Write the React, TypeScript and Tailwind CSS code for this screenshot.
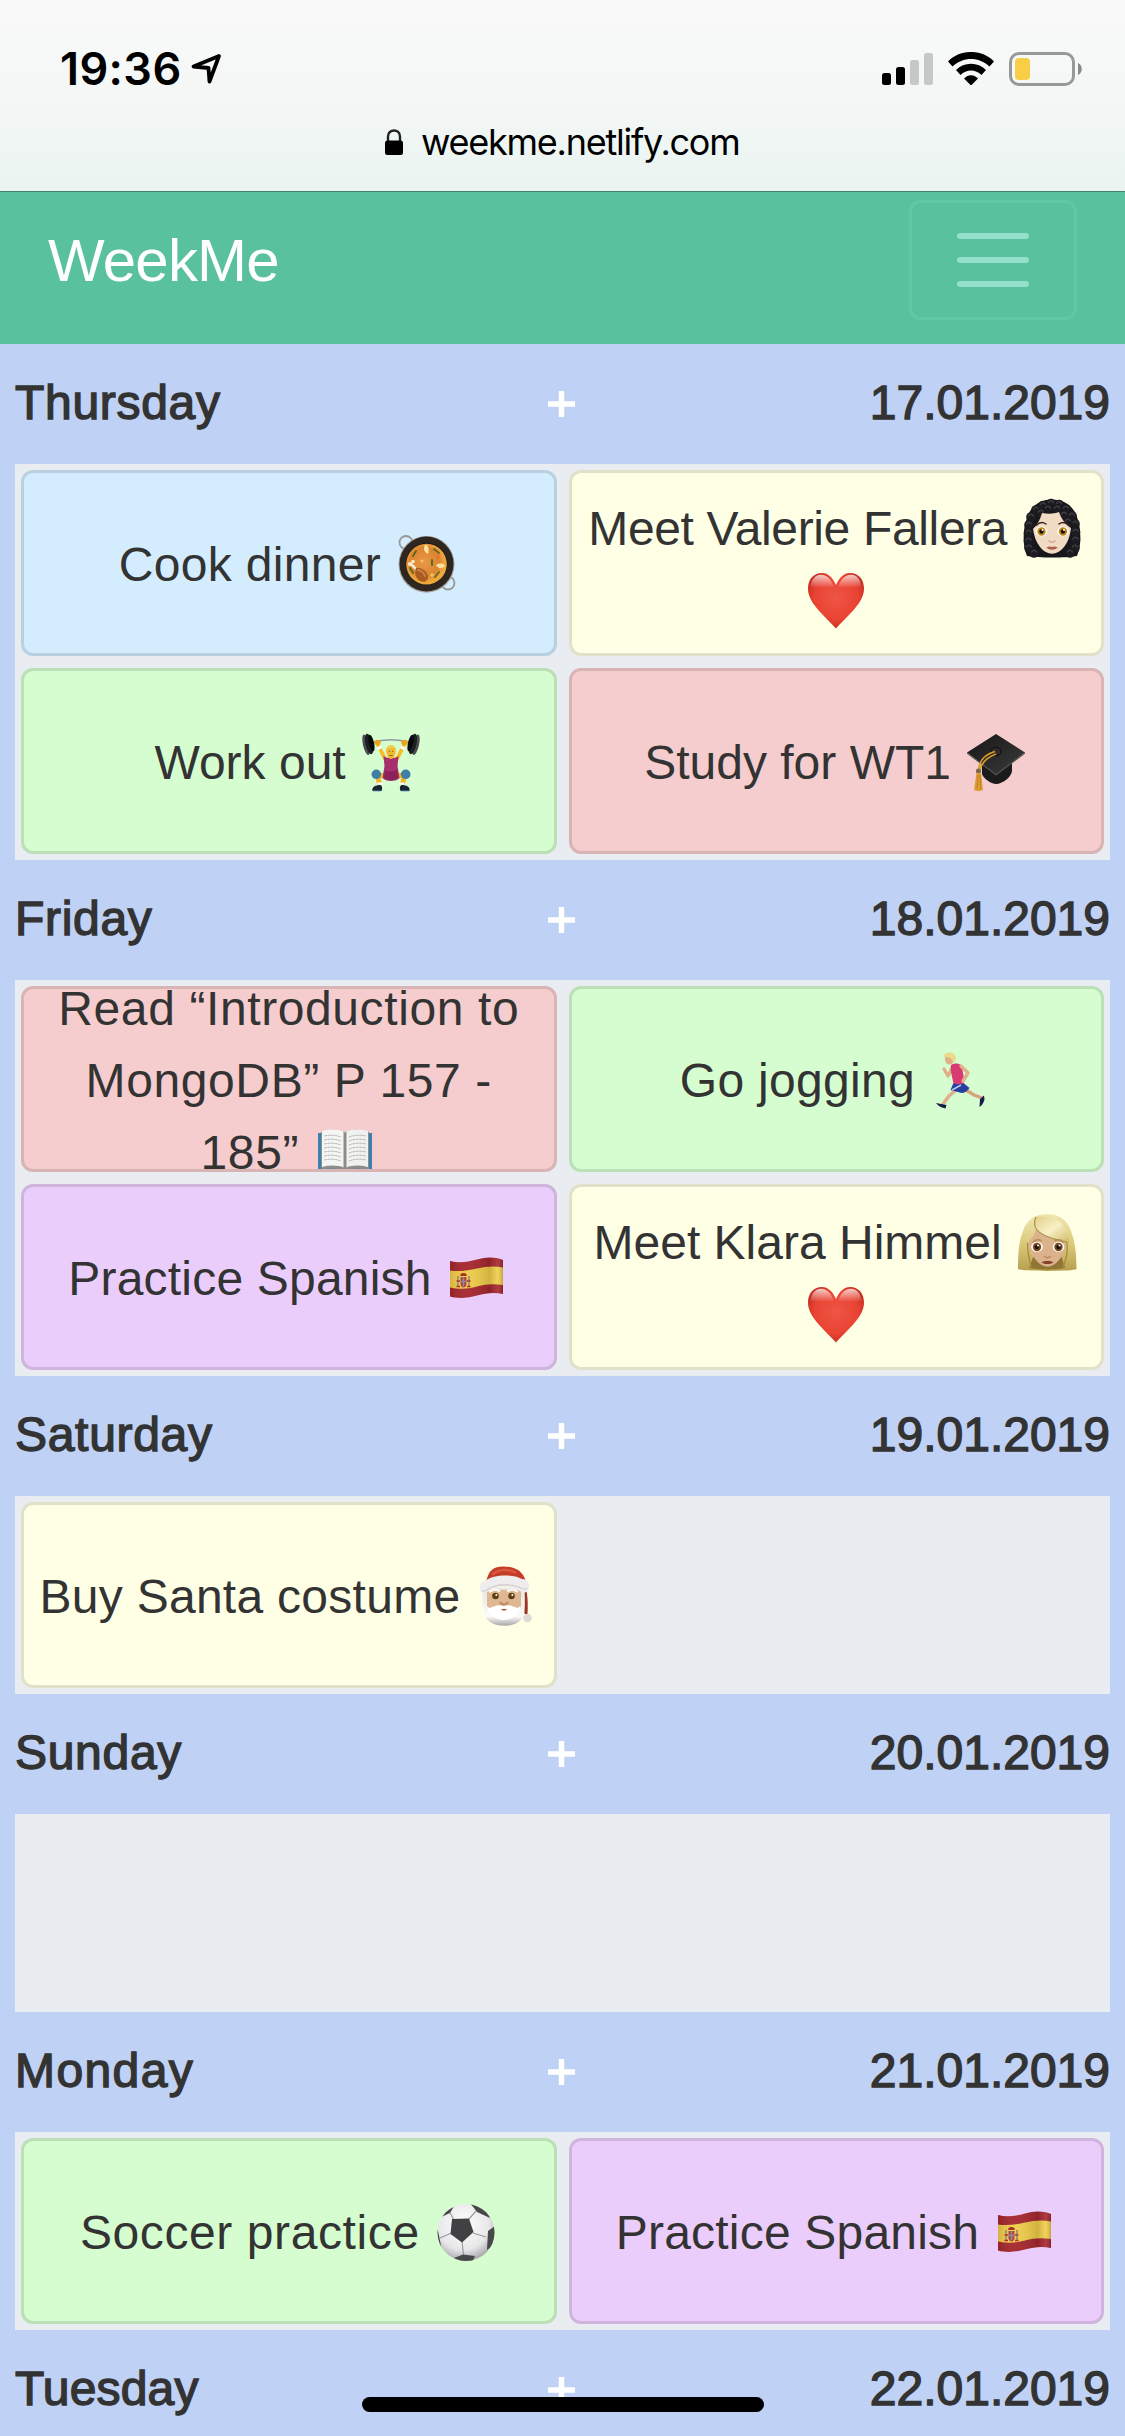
import React from "react";

type IconProps = { children: React.ReactNode };

function Emoji({ children }: IconProps) {
  return (
    <svg viewBox="0 0 60 60" className="mx-[2px] inline-block h-[60px] w-[60px] overflow-visible align-[-13px]">
      {children}
    </svg>
  );
}

function Pan() {
  return (
    <Emoji>
      <defs>
        <radialGradient id="stew" cx="45%" cy="45%">
          <stop offset="0" stopColor="#e89a45" />
          <stop offset="0.7" stopColor="#dd8430" />
          <stop offset="1" stopColor="#f0a83c" />
        </radialGradient>
      </defs>
      <circle cx="9" cy="8.5" r="6.5" fill="none" stroke="#9a9894" strokeWidth="1.8" />
      <circle cx="51" cy="49" r="6.5" fill="none" stroke="#9a9894" strokeWidth="1.8" />
      <ellipse cx="29.5" cy="30.3" rx="28" ry="28.4" fill="#a9a29a" />
      <ellipse cx="29.5" cy="30" rx="27" ry="27.4" fill="#2e2621" />
      <ellipse cx="29.5" cy="30" rx="21" ry="21.2" fill="#1d1815" />
      <ellipse cx="29.5" cy="30.2" rx="20.3" ry="20.4" fill="url(#stew)" />
      <path d="M28 11c-2 4-1 7 3 9 1-3 1-6-1-9zM39 31c2 4 6 4 9 1-2-3-5-3-9-1z" fill="#f9e3a2" />
      <path d="m19 17-3 5M37 15l5 4M35 26v5M42 38l-4 5M13 34l3 5" stroke="#5f6a21" strokeWidth="2" strokeLinecap="round" />
      <circle cx="41" cy="23" r="2" fill="#e8743a" />
      <circle cx="25" cy="27" r="1.6" fill="#f2c06b" />
      <circle cx="35" cy="41" r="1.8" fill="#f2c06b" />
      <path d="m14 30 7 7" stroke="#f8ead2" strokeWidth="2.6" strokeLinecap="round" />
      <circle cx="13" cy="30" r="2" fill="#f8ead2" />
      <circle cx="16" cy="27.5" r="1.8" fill="#f8ead2" />
      <path d="M19 34c5-1 12 4 12 9 0 4-4 6-8 4-4-2-6-8-4-13z" fill="#a85c22" />
      <path d="M21 36c3 0 6 3 7 6" stroke="#c98245" strokeWidth="2" fill="none" strokeLinecap="round" />
    </Emoji>
  );
}

function Lifter() {
  return (
    <Emoji>
      <path d="M10 11Q30 4.500 50 11" fill="none" stroke="#8f9aa0" strokeWidth="1.500" />
      <g transform="rotate(-13 8 11.500)">
        <ellipse cx="5" cy="12" rx="3.200" ry="10.500" fill="#4a4c50" />
        <ellipse cx="8" cy="12" rx="3.600" ry="10.500" fill="#1d1e21" />
        <ellipse cx="10.500" cy="11.500" rx="2.600" ry="8.500" fill="#08090a" />
      </g>
      <g transform="rotate(13 52 11.500)">
        <ellipse cx="55" cy="12" rx="3.200" ry="10.500" fill="#4a4c50" />
        <ellipse cx="52" cy="12" rx="3.600" ry="10.500" fill="#1d1e21" />
        <ellipse cx="49.500" cy="11.500" rx="2.600" ry="8.500" fill="#08090a" />
      </g>
      <path d="m17 13 7 14M43 13l-7 14" stroke="#f6bb27" strokeWidth="3.800" strokeLinecap="round" />
      <path d="m17.700 14.500 1.300 2.600M42.300 14.500 41 17.100" stroke="#fff" strokeWidth="4.600" />
      <ellipse cx="16.500" cy="10.500" rx="3.200" ry="2.800" fill="#e9a41c" />
      <ellipse cx="43.500" cy="10.500" rx="3.200" ry="2.800" fill="#e9a41c" />
      <path d="m25 44-8.500-1 2 9M35 44l8.500-1-2 9" fill="none" stroke="#f3b424" strokeWidth="5" strokeLinejoin="round" />
      <path d="M22.500 24c4 3 11 3 15 0l-1 10 2 12c-3 4-14 4-17 0l2-12z" fill="#a5306c" />
      <path d="M24 38c3 2 9 2 12 0l1 8c-4 3-10 3-14 0z" fill="#8c2159" />
      <path d="M26.500 23h7c0 5-7 5-7 0z" fill="#eeb02a" />
      <ellipse cx="30" cy="20" rx="4.600" ry="6.500" fill="#f1b730" />
      <path d="M24.800 22c-1.500-12 12-12 10.400 0-.7-3.500-1-5-2.200-6-3 1-5 1-6 0-1 1-1.500 3-2.200 6z" fill="#f2cb48" />
      <path d="M28 19.500h1M31 19.500h1M28.500 23.500h3" stroke="#8a5317" strokeWidth=".9" />
      <circle cx="15.300" cy="42.300" r="4.800" fill="#3f7fa6" />
      <circle cx="44.700" cy="42.300" r="4.800" fill="#3f7fa6" />
      <path d="M16.500 51.500h5M38.500 51.500h5" stroke="#fff" strokeWidth="2.200" />
      <path d="M11.500 59c-1-4 3-6 8-6 2 1 2 4 1 6zM48.500 59c1-4-3-6-8-6-2 1-2 4-1 6z" fill="#192530" />
      <path d="M12 59h8M40 59h8" stroke="#5f9fc4" strokeWidth=".8" />
    </Emoji>
  );
}

function Graduation() {
  return (
    <Emoji>
      <defs>
        <linearGradient id="board" x1="0" x2="1" y1="0" y2="1">
          <stop offset="0" stopColor="#151515" />
          <stop offset="1" stopColor="#3d3d3d" />
        </linearGradient>
      </defs>
      <path d="M16 28v14c1 4 9 10 14 10s16-6 16-14V28z" fill="#1b1b1b" />
      <path d="m30 2 29 18.500L30 43 1 20.500z" fill="url(#board)" />
      <path d="m1 20.500 29 21.500 29-21.500v1.200L30 43.500 1 21.700z" fill="#555" />
      <ellipse cx="30" cy="19.500" rx="5" ry="4.200" fill="#2c2c2c" stroke="#090909" />
      <path d="M29 19.500c-9 3-15 7-16.500 18M30 22c-8 3-14 7-16 16" fill="none" stroke="#d99b29" strokeWidth="1.700" />
      <circle cx="12.500" cy="39" r="2.600" fill="#7c6a4e" />
      <path d="M10.500 41h4.500l2 17c-3 1.500-6 1.500-9 0z" fill="#dd9c35" />
      <path d="m12 43-1 14M14 43l.5 14" stroke="#b9791e" strokeWidth=".8" />
    </Emoji>
  );
}

function Heart() {
  return (
    <Emoji>
      <defs>
        <radialGradient id="heart" cx="50%" cy="45%" r="60%">
          <stop offset="0" stopColor="#ef5545" />
          <stop offset="0.65" stopColor="#e94333" />
          <stop offset="1" stopColor="#bd2a20" />
        </radialGradient>
        <linearGradient id="shine" x1="0" x2="0" y1="0" y2="1">
          <stop offset="0" stopColor="#fff" stopOpacity=".75" />
          <stop offset="1" stopColor="#fff" stopOpacity="0" />
        </linearGradient>
      </defs>
      <path d="M30 15C26 6 21 3 16 3 7 3 2 10 2 18.500 2 33 17 44 30 58.500 43 44 58 33 58 18.500 58 10 53 3 44 3 39 3 34 6 30 15z" fill="url(#heart)" />
      <path d="M5 17C5 1 24 0 28 18zM55 17C55 1 36 0 32 18z" fill="url(#shine)" />
    </Emoji>
  );
}

function Eyes({ x1, x2, y, iris }: { x1: number; x2: number; y: number; iris: string }) {
  return (
    <>
      {[x1, x2].map((x) => (
        <g key={x}>
          <ellipse cx={x} cy={y} rx="5.800" ry="5" fill="#fff" />
          <circle cx={x} cy={y} r="4.200" fill={iris} />
          <circle cx={x} cy={y} r="2.200" fill="#1f1204" />
          <circle cx={x + 1} cy={y - 1.5} r="1" fill="#fff" />
        </g>
      ))}
    </>
  );
}

function CurlyWoman() {
  const curls = [
    [29, 5.5], [21, 7.5], [37, 6.5], [14, 12], [44, 11], [9, 19], [50, 18], [7, 27], [53, 26], [6.5, 35],
    [53.5, 34], [6.5, 43], [53.5, 42], [7, 50], [53, 50], [12, 55], [48, 55], [26, 11], [35, 11], [19, 15], [42, 17], [46, 24],
  ];
  return (
    <Emoji>
      <path d="M5 58C0 47 1 30 5 20 9 7 19 1.500 30 1.500S51 7 55 19c4 11 5 27 0 39-12 2-38 2-50 0z" fill="#17161a" />
      {curls.map(([x, y], i) => (
        <g key={i}>
          <circle cx={x} cy={y} r="4.800" fill="#1c1b1f" />
          <path d={`M${x - 2.5} ${y - 1}q2.500-3.500 5 0`} stroke="#3f3d44" strokeWidth="1.300" fill="none" strokeLinecap="round" />
        </g>
      ))}
      <path d="M11 31c4-4 7-9 9-16 6 1 12 1 17-1 2 6 6 12 12 16-1 8-3 14-7 19-7 9-17 9-24 0-4-5-6-11-7-18z" fill="#f1dbc4" />
      <path d="M14 27.500q5-5 10-1.500M37 26q5-3.500 10 1.500" stroke="#38271c" strokeWidth="1.500" fill="none" strokeLinecap="round" />
      <Eyes x1={19.5} x2={41} y={33.5} iris="#c08a1c" />
      <path d="M27 43q3 2.500 6 0" stroke="#d0a88e" strokeWidth="1.600" fill="none" strokeLinecap="round" />
      <path d="M24.500 49.500c3-1.500 4-1 5.500-.5 1.500-.5 3-1 5.500.5-3 3-8 3-11 0z" fill="#a9604a" />
    </Emoji>
  );
}

function BlondWoman() {
  return (
    <Emoji>
      <defs>
        <linearGradient id="blond" x1="0" x2="0" y1="0" y2="1">
          <stop offset="0" stopColor="#f1e7b4" />
          <stop offset="0.5" stopColor="#dccb7c" />
          <stop offset="1" stopColor="#b7a04f" />
        </linearGradient>
        <linearGradient id="fringe" x1="0" x2="1" y1="0" y2="1">
          <stop offset="0" stopColor="#e0cf85" />
          <stop offset="0.5" stopColor="#f7f0c6" />
          <stop offset="1" stopColor="#cdb965" />
        </linearGradient>
      </defs>
      <path d="M1 57C1 40 2 29 6 19 10 7 19 2 30 2s20 5 24 17c4 11 5.500 22 5.500 38-3 2.500-55 2.500-58.500 0z" fill="url(#blond)" />
      <path d="M18 40h25l5 16c-12 2-24 2-36 0z" fill="#8f7634" />
      <path d="M10.500 31c4-4 7-8 8.500-14 9 8 19 11 30.500 13-.5 7-3 13-7.500 18-7 9-16 9-23 0-5-5-7.500-10-8.500-17z" fill="#dcb28d" />
      <path d="M19 5c-3 5-3 9 0 13 8 8 20 10 33 13C52 16 42 2 19 5z" fill="url(#fringe)" />
      <path d="M19 5c-3 7-1 13 6 17 7 4 14 6 25 8" stroke="#a98f40" strokeWidth="1.100" fill="none" />
      <path d="M50 30c1 9-1 19-5 27M10.500 31c0 9 2 18 4 26" stroke="#a88c38" strokeWidth="1.300" fill="none" />
      <path d="M16 30q4-3.500 8-1.500M38 28.500q5-2 8 1.500" stroke="#b0904e" strokeWidth="1.400" fill="none" strokeLinecap="round" />
      <Eyes x1={20} x2={41.5} y={35} iris="#75491d" />
      <path d="M27.500 44.500q3 2.500 6 0" stroke="#bb8662" strokeWidth="1.600" fill="none" strokeLinecap="round" />
      <path d="M24.500 50.200c3-1.500 9-1.500 12 0-3 2.500-9 2.500-12 0z" fill="#84422c" />
    </Emoji>
  );
}

function Book() {
  return (
    <Emoji>
      <path d="M3 11h54v41H3z" fill="#3d7fae" />
      <path d="M26 47h8v5h-8z" fill="#927a2c" />
      <path d="M6 10c8-3 17-3 24 0 7-3 16-3 24 0v38c-8-2-17-2-24 2-7-4-16-4-24-2z" fill="#8d8d8b" />
      <path d="M7 9c8-2 16-2 23 1v36c-7-3-15-3-23-1z" fill="#f5f5f3" />
      <path d="M53 9c-8-2-16-2-23 1v36c7-3 15-3 23-1z" fill="#f1f1ef" />
      <path d="M28.500 9.500 30 10.500l1.500-1V46L30 48l-1.500-2z" fill="#8b8c8c" />
      {[14, 18, 22, 26, 30, 34, 38].map((y) => (
        <path key={y} d={`M9 ${y}q9-2 17 1M34 ${y + 1}q8-3 17-1`} stroke="#b0b0b0" strokeWidth=".9" strokeDasharray="3 .5" fill="none" />
      ))}
    </Emoji>
  );
}

function Runner() {
  return (
    <Emoji>
      <path d="m21 18-4 8-4-7" fill="none" stroke="#dfae85" strokeWidth="3.200" strokeLinecap="round" strokeLinejoin="round" />
      <path d="m25 40-7 6-6 8" fill="none" stroke="#e0b08a" strokeWidth="3.600" strokeLinecap="round" />
      <path d="m35 40 8 5 8 3" fill="none" stroke="#d6a47b" strokeWidth="3.400" strokeLinecap="round" strokeLinejoin="round" />
      <path d="m5 53 10.500 2-1 3.500C11 58 7 56 5 53zM53 45.500l.5 4c-1 3-2 6-5 7.500l.5-8z" fill="#161e47" />
      <path d="M22.500 33h10l6 5c-2 3-5 5-8 5l-11-3z" fill="#263fa0" />
      <path d="m21 40 9-5" stroke="#b9c7e8" strokeWidth="1.600" />
      <path d="M20 15c3-2 7-2 10 0 2 6 3.500 13 2.500 18.500-3.500 1-7 1-10 0-1-6-3.500-12-2.500-18.500z" fill="#d83b72" />
      <path d="m30 16 7 7-5 8" fill="none" stroke="#e0b08a" strokeWidth="3.400" strokeLinecap="round" strokeLinejoin="round" />
      <ellipse cx="18.500" cy="9" rx="4.600" ry="5.500" fill="#e0b08a" />
      <path d="M13 7c0-6 11-6 12 1 0 2-1 4-3 4-1-4-4-5-9-5z" fill="#ecd98a" />
    </Emoji>
  );
}

function Spain() {
  return (
    <Emoji>
      <defs>
        <linearGradient id="flagshade" x1="0" x2="1" y1="0" y2="0">
          <stop offset="0" stopColor="#000" stopOpacity=".12" />
          <stop offset=".3" stopColor="#fff" stopOpacity=".05" />
          <stop offset=".75" stopColor="#000" stopOpacity=".13" />
          <stop offset=".9" stopColor="#fff" stopOpacity=".1" />
          <stop offset="1" stopColor="#000" stopOpacity=".2" />
        </linearGradient>
      </defs>
      <path d="M3 13c9 2.500 18 1 27-1.500S47 8.500 56 12v34c-9-2-17-1-26 1.500S12 51 3 48.500z" fill="#a4262c" />
      <path d="M3 22.500c9 1.500 18 0 27-2s17-3 26-1V37c-9-1.500-17-1-26 1.500S12 41.500 3 39.500z" fill="#efcc48" />
      <path d="M3 13c9 2.500 18 1 27-1.500S47 8.500 56 12v34c-9-2-17-1-26 1.500S12 51 3 48.500z" fill="url(#flagshade)" />
      <path d="M11 28v10M22 28v10" stroke="#9b8572" strokeWidth="1.600" />
      <path d="M9.500 38.500h3.500M20 38.500h3.500M9.500 33h3.500M20 33h3.500" stroke="#b5302e" strokeWidth="1.400" />
      <path d="M13.500 29h6v7c0 4.500-6 4.500-6 0z" fill="#b5443c" />
      <path d="M16.500 29v9.500M13.500 33.500h6" stroke="#8d8aa0" strokeWidth="1.500" />
      <path d="M13.500 28c-2-4 8-4 6 0z" fill="#a33629" />
    </Emoji>
  );
}

function Santa() {
  return (
    <Emoji>
      <defs>
        <linearGradient id="beard" x1="0" x2="0" y1="0" y2="1">
          <stop offset="0" stopColor="#e6e2e2" />
          <stop offset=".75" stopColor="#fbfbfb" />
          <stop offset="1" stopColor="#aaa6a6" />
        </linearGradient>
      </defs>
      <path d="M46 10c5 10 6.500 24 5.500 38h-3V20z" fill="#9c3326" />
      <path d="M7 22h41c1 12 1 20-1 28-4 13-33 13-38 0-2-8-3-17-2-28z" fill="url(#beard)" />
      <path d="M11 24h34v17c-10 6-24 6-34 0z" fill="#deb890" />
      <path d="M10 17C12 4 18 .5 27 .5c12 0 20 4 23 15.500z" fill="#c43c27" />
      <path d="M17 8c6-5 16-5 22-1.500" stroke="#d9573d" strokeWidth="2.500" fill="none" strokeLinecap="round" />
      <path d="M5 26c-3-5 0-11 4-11 9-7 28-7 37-2 7 0 9 7 6 12-4 3-7 1-10-1-9-4-20-4-29 1-3 2-6 3-8 1z" fill="#eeecec" />
      <path d="M6 25c3 1 6-2 10-4 9-3 18-3 27 0 3 2 6 3 8 1" stroke="#d5d0cd" strokeWidth="1.300" fill="none" />
      <path d="M14 25.500q5-3.500 9-.5M32 25q5-3 9 .5" stroke="#faf7f3" strokeWidth="2.300" fill="none" strokeLinecap="round" />
      <circle cx="19.500" cy="30" r="3.300" fill="#5f3f13" />
      <circle cx="35.500" cy="30" r="3.300" fill="#5f3f13" />
      <circle cx="20.300" cy="29" r="1" fill="#fff" />
      <circle cx="36.300" cy="29" r="1" fill="#fff" />
      <path d="M24.500 37q3.500 3 7 0" stroke="#c48f6b" strokeWidth="2.600" fill="none" strokeLinecap="round" />
      <path d="M27.500 40c-5-2-9 0-14 2l-3-2c2 9 9 14 17 14s15-5 17-14l-3 2c-5-2-9-4-14-2z" fill="#fff" />
      <path d="M25 43h6q-3 3-6 0z" fill="#9e3e2b" />
      <circle cx="51.500" cy="52" r="4.300" fill="#dcd9d7" />
    </Emoji>
  );
}

function Soccer() {
  return (
    <Emoji>
      <defs>
        <radialGradient id="ball" cx="45%" cy="35%" r="65%">
          <stop offset="0" stopColor="#fff" />
          <stop offset=".7" stopColor="#e7e7e9" />
          <stop offset="1" stopColor="#a9a9ac" />
        </radialGradient>
        <clipPath id="ballclip"><circle cx="30" cy="30.500" r="28.500" /></clipPath>
      </defs>
      <circle cx="30" cy="30.500" r="28.500" fill="url(#ball)" />
      <g clipPath="url(#ballclip)">
        <path d="m18 18-5-9M33 17l7-8M15.500 31 4 36M26 39l1.500 14M37 31l13 4" stroke="#9c9c9f" strokeWidth="1.200" />
        <path d="m16 17 17-.5L37.500 30 26 40.500 14.500 32z" fill="#414143" />
        <path d="M3 16 9 5l11-4-6 10zM34 1l15 3 5 12-13-6zM52 29l7-5v18l-8 6zM27 52.500l12 1.500-3 7H22l-4-5zM0 24l2 5 4 19-6-5z" fill="#48484a" />
      </g>
    </Emoji>
  );
}

const TONES = {
  blue: "bg-[#d3edff] border-[#b9d0e0]",
  yellow: "bg-[#ffffe6] border-[#e1e1ca]",
  green: "bg-[#d5fdd0] border-[#bbdfb7]",
  red: "bg-[#f6cdce] border-[#d9b4b5]",
  purple: "bg-[#ebcdfb] border-[#cfb4dd]",
};

type Task = { tone: keyof typeof TONES; tracking: string; body: React.ReactNode };
type Day = { name: string; date: string; tracking: string; tasks: Task[] };

const DAYS: Day[] = [
  {
    name: "Thursday",
    date: "17.01.2019",
    tracking: "tracking-[0.7px]",
    tasks: [
      { tone: "blue", tracking: "tracking-[0.3px]", body: <>Cook dinner <Pan /></> },
      { tone: "yellow", tracking: "tracking-[-0.35px]", body: <>Meet Valerie Fallera <CurlyWoman /><br /><Heart /></> },
      { tone: "green", tracking: "tracking-normal", body: <>Work out <Lifter /></> },
      { tone: "red", tracking: "tracking-normal", body: <>Study for WT1 <Graduation /></> },
    ],
  },
  {
    name: "Friday",
    date: "18.01.2019",
    tracking: "tracking-[0.7px]",
    tasks: [
      { tone: "red", tracking: "tracking-[0.6px]", body: <>Read “Introduction to<br />MongoDB” P 157 -<br />185” <Book /></> },
      { tone: "green", tracking: "tracking-[0.3px]", body: <>Go jogging <Runner /></> },
      { tone: "purple", tracking: "tracking-[0.2px]", body: <>Practice Spanish <Spain /></> },
      { tone: "yellow", tracking: "tracking-normal", body: <>Meet Klara Himmel <BlondWoman /><br /><Heart /></> },
    ],
  },
  {
    name: "Saturday",
    date: "19.01.2019",
    tracking: "tracking-[0.7px]",
    tasks: [{ tone: "yellow", tracking: "tracking-[0.27px]", body: <>Buy Santa costume <Santa /></> }],
  },
  { name: "Sunday", date: "20.01.2019", tracking: "tracking-[0.7px]", tasks: [] },
  {
    name: "Monday",
    date: "21.01.2019",
    tracking: "tracking-[1.4px]",
    tasks: [
      { tone: "green", tracking: "tracking-[0.6px]", body: <>Soccer practice <Soccer /></> },
      { tone: "purple", tracking: "tracking-[0.2px]", body: <>Practice Spanish <Spain /></> },
    ],
  },
  { name: "Tuesday", date: "22.01.2019", tracking: "tracking-[0.2px]", tasks: [] },
];

function BrowserBar() {
  return (
    <header className="h-[192px] border-b border-[#44806c] bg-linear-to-b from-[#f9f9f9] via-[#f5f7f7] to-[#e9f4f0] font-[Inter,sans-serif] text-black">
      <div className="flex h-[112px] items-start justify-between pt-[41px] pr-[42px] pl-[60px]">
        <div className="flex items-start">
          <span className="w-[131px] text-[45px] leading-[56px] font-semibold tracking-[0.4px]">19:36</span>
          <svg viewBox="0 0 32 32" className="mt-[12px] h-[32px] w-[32px]">
            <path d="M28 3 2.500 13.500 17.500 15 18.500 28.500z" fill="none" stroke="#000" strokeWidth="3.800" strokeLinejoin="round" />
          </svg>
        </div>
        <div className="flex items-start pt-[11px]">
          <svg viewBox="0 0 51 34" className="h-[34px] w-[51px]">
            <rect x="0" y="21" width="9" height="12" rx="2.500" />
            <rect x="14" y="15" width="9" height="18" rx="2.500" />
            <rect x="28" y="8" width="9" height="25" rx="2.500" fill="#c6c7c7" />
            <rect x="42" y="1" width="9" height="32" rx="2.500" fill="#c6c7c7" />
          </svg>
          <svg viewBox="0 0 46 33" className="ml-[15px] h-[33px] w-[46px]">
            <path d="M0 9.500C12-3.200 34-3.200 46 9.500l-4.500 5C31 4.500 15 4.500 4.500 14.500z" />
            <path d="M8 18c8-8.500 22-8.500 30 0l-4.500 5c-6-6-15-6-21 0z" />
            <path d="M16 26.500c4-4.500 10-4.500 14 0L23 33.500z" />
          </svg>
          <svg viewBox="0 0 74 34" className="ml-[15px] h-[34px] w-[74px]">
            <rect x="1.500" y="1.500" width="63" height="31" rx="8.500" fill="none" stroke="#979898" strokeWidth="3" />
            <rect x="6" y="6" width="15" height="22" rx="4" fill="#f7ce46" />
            <path d="M69 11c5 2 5 10 0 12z" fill="#888" />
          </svg>
        </div>
      </div>
      <div className="flex items-center pl-[385px]">
        <svg viewBox="0 0 18 26" className="h-[26px] w-[18px]">
          <path d="M3 13V7.500C3 -.5 15 -.5 15 7.500V13" fill="none" stroke="#222" strokeWidth="2.400" />
          <rect y="11.500" width="18" height="14.500" rx="2.500" />
        </svg>
        <span className="ml-[18px] text-[36px] leading-[60px] tracking-[-1.25px] whitespace-nowrap">weekme.netlify.com</span>
      </div>
    </header>
  );
}

function Navbar() {
  return (
    <nav className="flex h-[152px] items-center justify-between bg-[#5ac19e] pt-2 pr-12 pb-6 pl-12">
      <span className="pt-[2px] text-[60px] leading-[90px] tracking-[-0.8px] text-white">WeekMe</span>
      <button className="flex h-[120px] w-[168px] flex-col items-center justify-center gap-[18px] rounded-xl border-[3px] border-[#61c8a7]">
        <i className="h-[6px] w-[72px] rounded-full bg-[#96dfc8]" />
        <i className="h-[6px] w-[72px] rounded-full bg-[#96dfc8]" />
        <i className="h-[6px] w-[72px] rounded-full bg-[#96dfc8]" />
      </button>
    </nav>
  );
}

function DaySection({ day }: { day: Day }) {
  return (
    <section>
      <div className="grid h-[120px] grid-cols-[533px_27px_1fr] items-center">
        <h2 className={`pb-[2px] leading-[72px] [-webkit-text-stroke:1.4px_#333] ${day.tracking}`}>{day.name}</h2>
        <svg viewBox="0 0 27 26" className="h-[26px] w-[27px]">
          <path d="M13.500 1.500v23M2 13h23" stroke="#fff" strokeWidth="5.500" strokeLinecap="square" strokeLinejoin="round" />
        </svg>
        <span className="pb-[2px] text-right leading-[72px] [-webkit-text-stroke:1.4px_#333]">{day.date}</span>
      </div>
      <div className="grid min-h-[198px] grid-cols-2 bg-[#e9edf2]">
        {day.tasks.map((task, i) => (
          <div key={i} className="h-[198px] p-[6px]">
            <div className={`flex h-full items-center justify-center overflow-hidden rounded-xl border-[3px] pt-[4px] text-center leading-[72px] ${TONES[task.tone]}`}>
              <p className={`whitespace-nowrap ${task.tracking}`}>{task.body}</p>
            </div>
          </div>
        ))}
      </div>
    </section>
  );
}

export default function App() {
  return (
    <div className="relative h-[2436px] w-[1125px] overflow-hidden bg-[#bfd1f5] font-['Liberation_Sans',Arial,sans-serif] text-[48px] text-[#333]">
      <BrowserBar />
      <Navbar />
      <main className="h-[2092px] overflow-hidden px-[15px]">
        {DAYS.map((day) => (
          <DaySection key={day.date} day={day} />
        ))}
      </main>
      <div className="absolute bottom-[24px] left-[362px] h-[15px] w-[402px] rounded-full bg-black" />
    </div>
  );
}
